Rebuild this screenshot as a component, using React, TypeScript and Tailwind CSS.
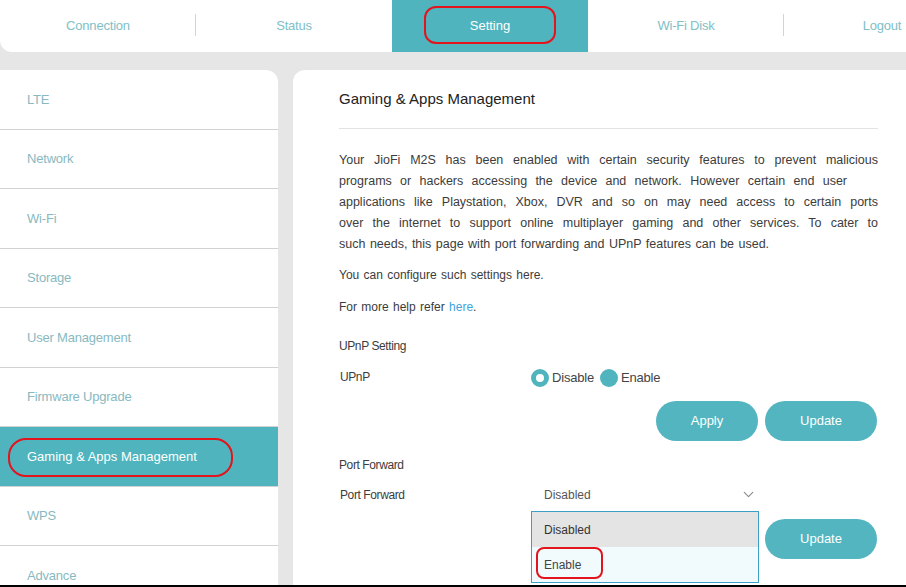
import { ChevronDown } from 'lucide-react';

const tabs = ['Connection', 'Status', 'Setting', 'Wi-Fi Disk', 'Logout'];
const menu = ['LTE', 'Network', 'Wi-Fi', 'Storage', 'User Management', 'Firmware Upgrade', 'Gaming & Apps Management', 'WPS', 'Advance'];

export default function App() {
  return (
    <div className="relative h-[587px] w-[906px] overflow-hidden bg-[#e6e6e6] font-['Liberation_Sans',Arial,sans-serif]">
      {/* top nav */}
      <div className="flex h-[52px] w-[980px] rounded-bl-[12px] bg-white">
        {tabs.map((t, i) => (
          <div key={t} className="relative flex h-full w-[196px] shrink-0 items-center justify-center">
            {i === 2 ? (
              <div className="flex h-full w-[197px] items-center justify-center bg-[#4fb4be] text-[13px] text-white">{t}</div>
            ) : (
              <span className="text-[13px] tracking-[-0.2px] text-[#80c0c7]">{t}</span>
            )}
            {(i === 0 || i === 3) && <div className="absolute right-0 top-[14px] h-[22px] w-px bg-[#d4d4d4]" />}
          </div>
        ))}
      </div>

      <div className="mt-[18px] flex gap-[15px]">
        {/* sidebar */}
        <div className="h-[520px] w-[278px] shrink-0 overflow-hidden rounded-tr-[12px] bg-white">
          {menu.map((m, i) => (
            <div
              key={m}
              className={
                i === 6
                  ? 'flex h-[59.5px] items-center border-b border-[#d2d2d2] bg-[#4fb4be] pl-[27px] text-[13px] text-white'
                  : 'flex h-[59.5px] items-center border-b border-[#d2d2d2] pl-[27px] text-[13px] tracking-[-0.2px] text-[#88b9c1]'
              }
            >
              {m}
            </div>
          ))}
        </div>

        {/* main panel */}
        <div className="h-[520px] w-[640px] shrink-0 rounded-tl-[12px] bg-white pl-[46px] pr-[55px] text-[12px] text-[#3c3c3c]">
          <div className="flex h-[59px] items-center border-b border-[#e2e2e2] text-[15px] text-[#222]">Gaming &amp; Apps Management</div>

          <div className="mt-[21px] whitespace-nowrap text-[12.5px] leading-[21px]">
            <div className="text-justify [text-align-last:justify]">Your JioFi M2S has been enabled with certain security features to prevent malicious</div>
            <div className="w-[508px] text-justify [text-align-last:justify]">programs or hackers accessing the device and network. However certain end user</div>
            <div className="text-justify [text-align-last:justify]">applications like Playstation, Xbox, DVR and so on may need access to certain ports</div>
            <div className="text-justify [text-align-last:justify]">over the internet to support online multiplayer gaming and other services. To cater to</div>
            <div className="[word-spacing:1px]">such needs, this page with port forwarding and UPnP features can be used.</div>
          </div>

          <div className="mt-[10px] leading-[21px] [word-spacing:1px]">You can configure such settings here.</div>
          <div className="mt-[11px] leading-[21px] [word-spacing:1px]">
            For more help refer <span className="text-[#3fa2dc]">here</span>.
          </div>

          <div className="mt-[18px] leading-[21px] tracking-[-0.4px]">UPnP Setting</div>
          <div className="mt-[9px] flex h-[21px] items-center">
            <div className="w-[192px] pl-px tracking-[-0.4px]">UPnP</div>
            <div className="flex items-center pt-[2px] text-[13px] tracking-[-0.2px] text-[#444]">
              <span className="h-[18px] w-[18px] rounded-full border-[5px] border-[#4fb4be] bg-white" />
              <span className="ml-[3px] mr-[6px]">Disable</span>
              <span className="h-[18px] w-[18px] rounded-full bg-[#4fb4be]" />
              <span className="ml-[3px]">Enable</span>
            </div>
          </div>

          <div className="mt-[14px] flex justify-end gap-[7px] pr-px">
            <button className="h-[40px] w-[102px] rounded-full bg-[#52b5bf] text-[13px] text-white">Apply</button>
            <button className="h-[40px] w-[112px] rounded-full bg-[#52b5bf] text-[13px] text-white">Update</button>
          </div>

          <div className="mt-[14px] leading-[21px] tracking-[-0.4px]">Port Forward</div>
          <div className="relative mt-[8px] flex h-[21px] items-center">
            <div className="w-[192px] pl-px tracking-[-0.4px]">Port Forward</div>
            <div className="flex w-[228px] items-center justify-between pl-[13px] pr-[2px] text-[#555]">
              <span>Disabled</span>
              <ChevronDown size={17} strokeWidth={1.6} className="text-[#8a8a8a]" />
            </div>
            <div className="absolute left-[192px] top-[27px] z-10 w-[228px] border border-[#3b9fc6] bg-[#f1fafd]">
              <div className="flex h-[35px] items-center bg-[#e4e4e4] pl-[12px] text-[#333]">Disabled</div>
              <div className="flex h-[35px] items-center pl-[12px] text-[#444]">Enable</div>
            </div>
          </div>

          <div className="mt-[14px] flex justify-end pr-px">
            <button className="h-[40px] w-[112px] rounded-full bg-[#52b5bf] text-[13px] text-white">Update</button>
          </div>
        </div>
      </div>

      {/* red annotation marks */}
      <div className="absolute left-[424px] top-[6px] h-[38px] w-[132px] rounded-[12px] border-[2px] border-[#e3141c]" />
      <div className="absolute left-[8px] top-[438px] h-[39px] w-[225px] rounded-[18px] border-[2px] border-[#e3141c]" />
      <div className="absolute left-[536px] top-[547px] z-20 h-[32px] w-[67px] rounded-[8px] border-[2px] border-[#e3141c]" />

      <div className="absolute bottom-0 left-0 h-[2px] w-full bg-black" />
    </div>
  );
}
